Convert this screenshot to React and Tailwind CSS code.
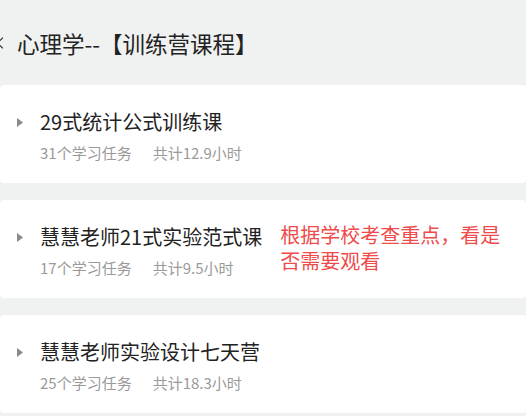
import { ChevronLeft } from "lucide-react";

const courses = [
  { title: "29式统计公式训练课", tasks: 31, hours: "12.9" },
  {
    title: "慧慧老师21式实验范式课",
    tasks: 17,
    hours: "9.5",
    note: "根据学校考查重点，看是否需要观看",
  },
  { title: "慧慧老师实验设计七天营", tasks: 25, hours: "18.3" },
];

const CourseCard = ({ course }) => {
  return (
    <div className="flex h-[98px] bg-white rounded-sm pl-[17px] pt-[23px]">
      <div className="flex flex-col">
        <div className="flex items-center">
          <svg width="6" height="9" viewBox="0 0 6 9" className="mr-[17px]">
            <path d="M0 0 L6 4.5 L0 9 Z" fill="#8a8a8a" />
          </svg>
          <span className="text-[20px] leading-[28px] text-[#222]">
            {course.title}
          </span>
        </div>
        <div className="flex mt-[7px] ml-[23px] text-[15px] leading-[20px] text-[#9a9a9a]">
          <span>{course.tasks}个学习任务</span>
          <span className="ml-[21px]">共计{course.hours}小时</span>
        </div>
      </div>
      {course.note && (
        <p className="ml-[18px] mt-[-1px] w-[224px] text-[20px] leading-[26px] text-[#ef4b4b]">
          {course.note}
        </p>
      )}
    </div>
  );
};

const App = () => {
  return (
    <div
      className="w-[526px] h-[416px] overflow-hidden bg-[#f0f1f1]"
      style={{ fontFamily: '"Microsoft YaHei", "Noto Sans CJK SC", sans-serif' }}
    >
      <header className="flex items-center h-[85px]">
        <ChevronLeft className="ml-[-10px] w-[20px] h-[20px] text-[#333]" strokeWidth={1.4} />
        <h1 className="ml-[7px] text-[22.5px] leading-[30px] text-[#222]">
          心理学--【训练营课程】
        </h1>
      </header>
      <div className="flex flex-col gap-[17px]">
        {courses.map((course) => (
          <CourseCard key={course.title} course={course} />
        ))}
      </div>
    </div>
  );
};

export default App;
